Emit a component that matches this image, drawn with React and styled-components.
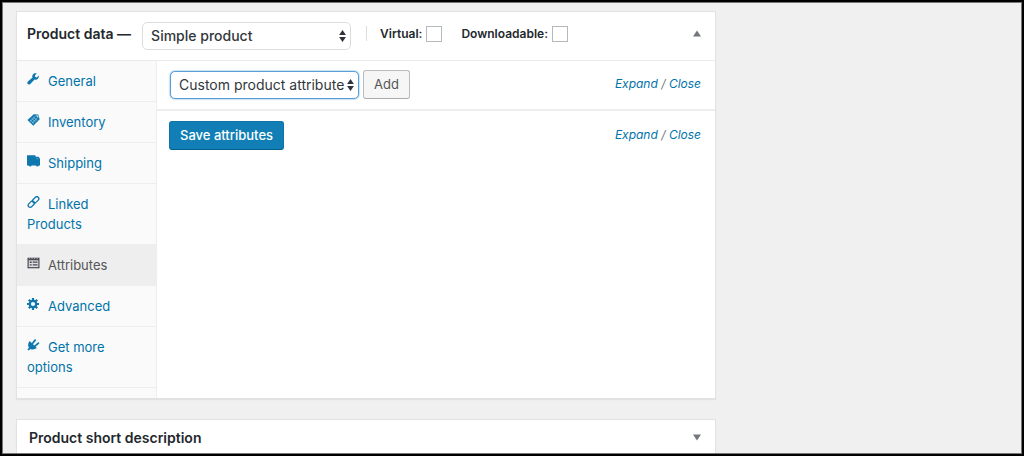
import React from 'react'
import styled, { createGlobalStyle } from 'styled-components'

const GlobalStyle = createGlobalStyle`
  *, *::before, *::after {
    box-sizing: border-box;
  }

  body {
    margin: 0;
    background: #f0f0f0;
    color: #23282d;
    font-family: Inter, 'Open Sans', sans-serif;
    font-size: 13px;
    line-height: 20px;
  }

  button, input, select {
    margin: 0;
    font-family: inherit;
  }
`

const Screen = styled.div`
  height: 100vh;
  overflow: hidden;
  border: 2px solid #000;
  outline: 1px solid #777;
  outline-offset: -3px;
`

const Columns = styled.div`
  display: grid;
  grid-template-columns: minmax(0, 1fr) 280px;
  gap: 20px;
  padding: 9px 6px 0 14px;
`

const Main = styled.main`
  display: flex;
  flex-direction: column;
  gap: 20px;
`

const Panel = styled.section`
  background: #fff;
  border: 1px solid #e2e2e2;
  box-shadow: 0 1px 1px rgba(0, 0, 0, 0.06);
`

const PanelHeader = styled.header`
  display: flex;
  align-items: center;
  height: 49px;
  padding: 0 12px 5px 10px;
  border-bottom: 1px solid #eaeaea;
`

const ShortHeader = styled(PanelHeader)`
  height: 36px;
  padding: 0 12px;
`

const Title = styled.h2`
  margin: 0;
  font-size: 14px;
  font-weight: 600;
`

const SelectWrapper = styled.div`
  position: relative;
  width: ${props => props.$width};
  margin: ${props => props.$margin || 0};

  svg {
    position: absolute;
    top: 8px;
    right: 5px;
    pointer-events: none;
  }
`

const StyledSelect = styled.select`
  appearance: none;
  display: block;
  width: 100%;
  height: 28px;
  padding: 0 14px 1px 8px;
  border: 1px solid ${props => (props.$focused ? '#5b9dd9' : '#ddd')};
  border-radius: 5px;
  outline: none;
  background: #fff;
  box-shadow: ${props => (props.$focused ? '0 0 2px rgba(30, 140, 190, 0.8)' : 'none')};
  color: #32373c;
  font-size: 14px;
  font-weight: ${props => (props.$bold ? 500 : 400)};
`

const TypeOptions = styled.div`
  display: flex;
  align-items: center;
  gap: 19px;
  height: 15px;
  margin-left: 15px;
  padding-left: 13px;
  border-left: 1px solid #ddd;
`

const CheckLabel = styled.label`
  display: flex;
  align-items: center;
  gap: 4px;
  font-size: 12px;
  font-weight: 600;
`

const Checkbox = styled.input`
  appearance: none;
  width: 16px;
  height: 16px;
  border: 1px solid #b4b9be;
  background: #fff;
`

const Toggle = styled.button`
  display: flex;
  margin-left: auto;
  padding: 2px;
  border: 0;
  background: none;
  color: #72777c;
`

const PanelBody = styled.div`
  display: flex;
  min-height: 337px;
`

const Tabs = styled.ul`
  flex: none;
  width: 140px;
  margin: 0;
  padding: 0;
  border-right: 1px solid #eee;
  background: #fafafa;
  list-style: none;
`

const Tab = styled.li`
  border-bottom: 1px solid #eee;
`

const TabLink = styled.a`
  display: block;
  padding: 10px;
  background: ${props => (props.$active ? '#eee' : 'transparent')};
  color: ${props => (props.$active ? '#555' : '#0073aa')};
  text-decoration: none;

  svg {
    margin-right: 8px;
    vertical-align: 1px;
    color: ${props => (props.$active ? '#4a4a55' : '#0f76ae')};
  }
`

const Content = styled.div`
  flex: 1;
`

const Toolbar = styled.div`
  display: flex;
  align-items: center;
  gap: 4px;
  height: ${props => (props.$divided ? '50px' : '49px')};
  padding: ${props => (props.$divided ? '0 14px 1px 13px' : '0 14px 0 12px')};
  border-bottom: ${props => (props.$divided ? '2px solid #eee' : '0')};
`

const Button = styled.button`
  height: 29px;
  padding: 0 10px 2px;
  border: 1px solid ${props => (props.$primary ? '#0e73a5' : '#bbb')};
  border-bottom-color: ${props => (props.$primary ? '#00608c' : '#aaa')};
  border-radius: 3px;
  background: ${props => (props.$primary ? '#117fb5' : '#f6f6f6')};
  color: ${props => (props.$primary ? '#fff' : '#555')};
  font-size: 13px;
  font-weight: ${props => (props.$primary ? 500 : 400)};
`

const ExpandClose = styled.span`
  margin-left: auto;
  padding-bottom: 2px;
  color: #777;
  font-size: 12px;
  font-style: italic;

  a {
    color: #0073aa;
    text-decoration: none;
  }
`

const Arrows = () => (
  <svg width="7" height="12" viewBox="0 0 7 12" fill="#32323c" aria-hidden="true">
    <path d="M3.5 0L6.9 5H.1zM3.5 12L.1 7h6.8z" />
  </svg>
)

const Caret = ({ down }) => (
  <svg width="8" height="7" viewBox="0 0 8 7" fill="currentColor" aria-hidden="true">
    <path d={down ? 'M0 .5h8L4 6.5z' : 'M0 6.5h8L4 .5z'} />
  </svg>
)

const icons = {
  wrench: (
    <path d="M11.8 2.6L9.9 4.4 8.3 4l-.4-1.6L9.7.6C8.3 0 6.7.4 5.9 1.5 5.2 2.4 5.1 3.5 5.5 4.5L.9 8.6C.2 9.3.2 10.4.8 11.1c.7.7 1.800.6 2.500-.1l4.200-4.500c1.100.4 2.300.2 3.200-.6 1-.9 1.400-2.100 1.100-3.300z" />
  ),
  tag: (
    <>
      <path d="M.4 6L6.8.2l4.400.3 1.500 4.700-6.400 6.600z" />
      <path d="M3 5.800l4 3.800M4.600 4.300l4 3.700M6.200 2.900l4 3.700M2.900 7.600L8.300 2.300M4.800 9.400L10.400 4" stroke="#b9dcec" strokeWidth=".6" />
      <path d="M8.500 1.300l2.400.3.600 2.600z" fill="#d5e8f1" />
    </>
  ),
  truck: (
    <>
      <path d="M0 .2h8.500v1.600h3L13 3.800v6.600h-1.200a1.500 1.500 0 0 1-2.900 0H4.600a1.500 1.500 0 0 1-2.900 0H0z" />
      <path d="M9.500 3h1.300l.9 1.300H9.500z" fill="#4d9bc4" />
    </>
  ),
  link: (
    <g fill="none" stroke="currentColor" strokeWidth="1.300" transform="rotate(-45 6.500 6)">
      <rect x="-.2" y="4" width="7.200" height="4" rx="2" />
      <rect x="6" y="4" width="7.200" height="4" rx="2" />
    </g>
  ),
  form: (
    <>
      <path d="M.5.700h12v10.600H.5z" />
      <path d="M1.700 3.300h9.600v6.800H1.700z" fill="#dedee0" />
      <path d="M2.700 4.600h2v1.300h-2zM5.700 4.600h4.800v1.200H5.700zM2.700 7.200h2v1.300h-2zM5.700 7.200h4.800v1.200H5.700z" />
      <path d="M2 1.600h1.200M4.500 1.600h1.200M7 1.600h1.200M9.500 1.600h1.200" stroke="#dedee0" strokeWidth=".6" />
    </>
  ),
  gear: (
    <>
      <circle cx="6" cy="6" r="3.200" fill="none" stroke="currentColor" strokeWidth="2.200" />
      <path d="M6 0v2.500M6 9.500V12M0 6h2.500M9.500 6H12M1.800 1.800l1.700 1.700M8.500 8.500l1.700 1.700M10.200 1.800L8.500 3.500M3.500 8.500l-1.700 1.700" stroke="currentColor" strokeWidth="2.200" />
    </>
  ),
  plug: (
    <>
      <path d="M2.700 2L9.800 9C8 10.500 5.500 10.900 3.400 9.900L1.600 11.600.4 10.500 1.900 8.800C.6 6.500 1 4 2.700 2z" />
      <path d="M5.400 4.500L8.200 1.200M8 7.100l3.400-3" stroke="currentColor" strokeWidth="1.800" strokeLinecap="round" />
    </>
  )
}

const TabIcon = ({ name }) => (
  <svg width="13" height="12" viewBox="0 0 13 12" fill="currentColor" aria-hidden="true">
    {icons[name]}
  </svg>
)

const tabs = [
  { label: 'General', icon: 'wrench' },
  { label: 'Inventory', icon: 'tag' },
  { label: 'Shipping', icon: 'truck' },
  { label: 'Linked Products', icon: 'link' },
  { label: 'Attributes', icon: 'form', active: true },
  { label: 'Advanced', icon: 'gear' },
  { label: 'Get more options', icon: 'plug' }
]

const ExpandLinks = () => (
  <ExpandClose>
    <a href="#expand">Expand</a> / <a href="#close">Close</a>
  </ExpandClose>
)

const App = () => (
  <>
    <GlobalStyle />
    <Screen>
      <Columns>
        <Main>
          <Panel>
            <PanelHeader>
              <Title>Product data —</Title>
              <SelectWrapper $width="209px" $margin="4px 0 0 11px">
                <StyledSelect $bold aria-label="Product type">
                  <option>Simple product</option>
                </StyledSelect>
                <Arrows />
              </SelectWrapper>
              <TypeOptions>
                <CheckLabel>
                  Virtual: <Checkbox type="checkbox" />
                </CheckLabel>
                <CheckLabel>
                  Downloadable: <Checkbox type="checkbox" />
                </CheckLabel>
              </TypeOptions>
              <Toggle aria-label="Collapse product data">
                <Caret />
              </Toggle>
            </PanelHeader>
            <PanelBody>
              <Tabs>
                {tabs.map(tab => (
                  <Tab key={tab.label}>
                    <TabLink href="#tab" $active={tab.active}>
                      <TabIcon name={tab.icon} />
                      {tab.label}
                    </TabLink>
                  </Tab>
                ))}
              </Tabs>
              <Content>
                <Toolbar $divided>
                  <SelectWrapper $width="189px">
                    <StyledSelect $focused aria-label="Attribute">
                      <option>Custom product attribute</option>
                    </StyledSelect>
                    <Arrows />
                  </SelectWrapper>
                  <Button>Add</Button>
                  <ExpandLinks />
                </Toolbar>
                <Toolbar>
                  <Button $primary>Save attributes</Button>
                  <ExpandLinks />
                </Toolbar>
              </Content>
            </PanelBody>
          </Panel>
          <Panel>
            <ShortHeader>
              <Title>Product short description</Title>
              <Toggle aria-label="Expand product short description">
                <Caret down />
              </Toggle>
            </ShortHeader>
          </Panel>
        </Main>
      </Columns>
    </Screen>
  </>
)

export default App
